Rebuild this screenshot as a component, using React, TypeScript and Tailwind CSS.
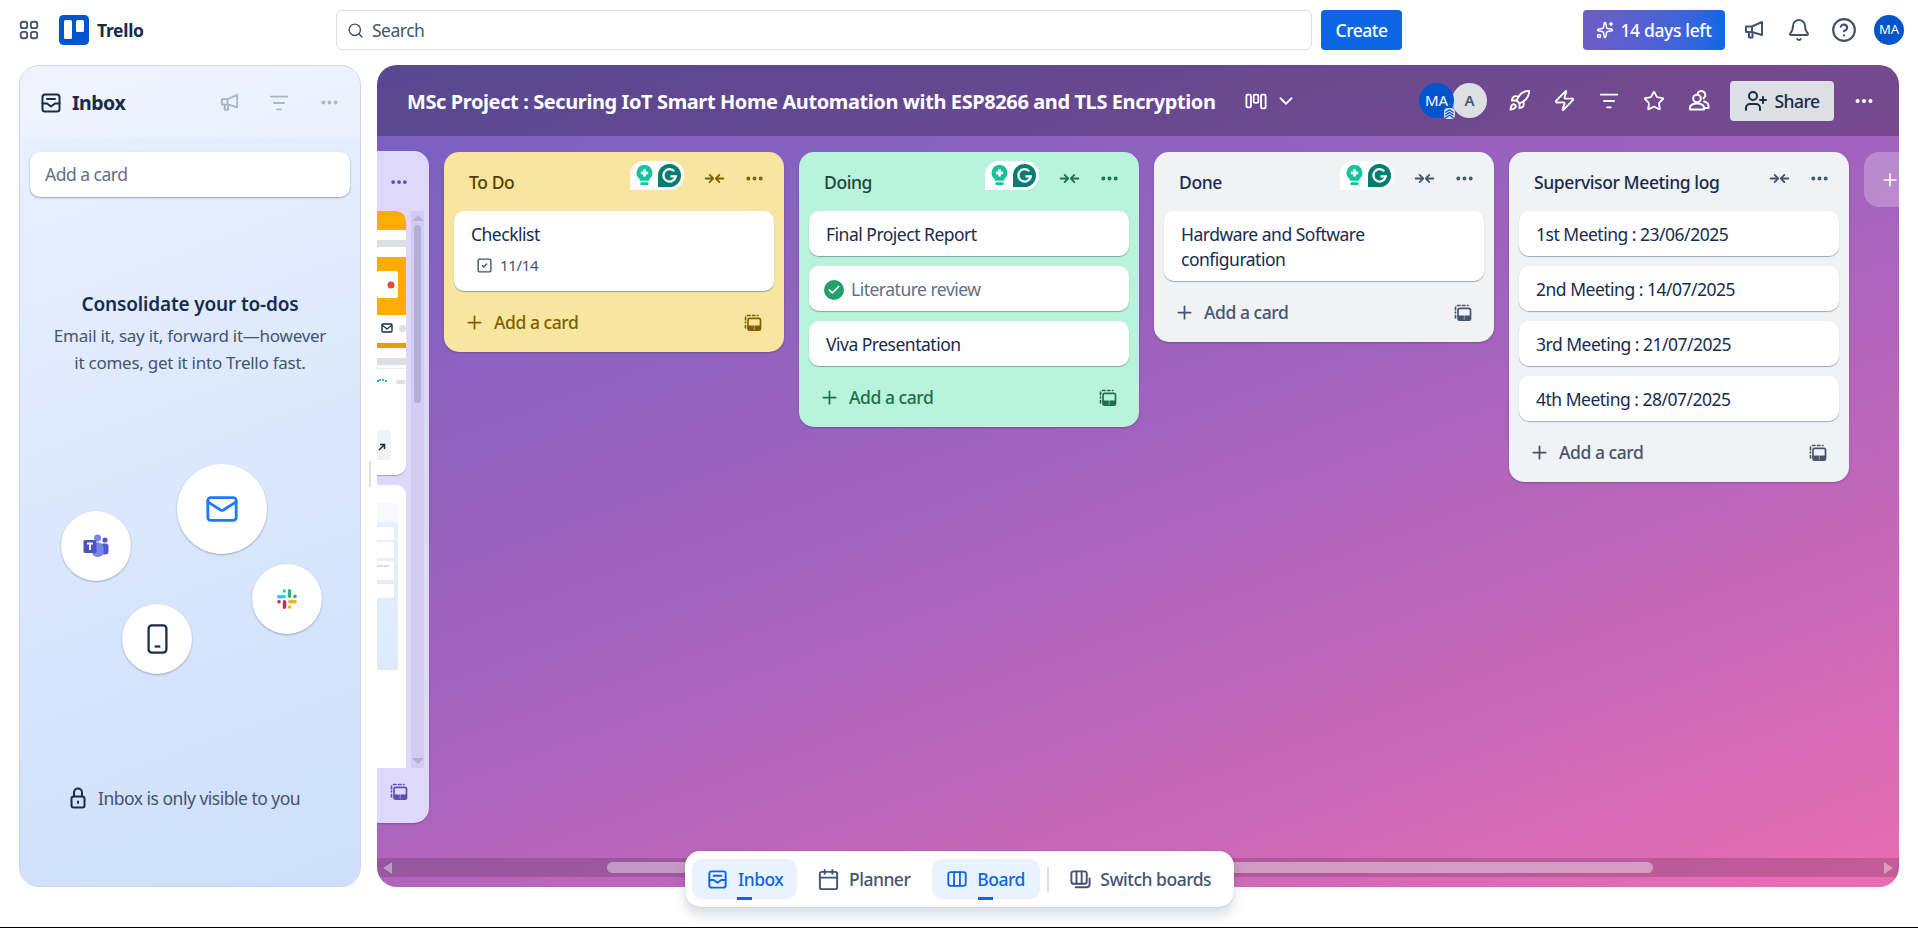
import React from 'react';
import { Search, Bell, CircleHelp, Sparkles, Rocket, Zap, Star, UserPlus, Ellipsis, Plus, ChevronDown, Mail, Calendar, SquareCheck, Check } from 'lucide-react';

type IconProps = { className?: string };

const svgProps = {
  viewBox: '0 0 24 24',
  fill: 'none',
  stroke: 'currentColor',
  strokeWidth: 2,
  strokeLinecap: 'round' as const,
  strokeLinejoin: 'round' as const,
};

const GridIcon = ({ className }: IconProps) => (
  <svg {...svgProps} className={className}>
    <rect x="3" y="3" width="7" height="7" rx="2.5" />
    <rect x="14" y="3" width="7" height="7" rx="2.5" />
    <rect x="3" y="14" width="7" height="7" rx="2.5" />
    <rect x="14" y="14" width="7" height="7" rx="2.5" />
  </svg>
);

const InboxIcon = ({ className }: IconProps) => (
  <svg {...svgProps} className={className}>
    <rect x="3.5" y="3.5" width="17" height="17" rx="2.5" />
    <path d="M8 8h8" />
    <path d="M3.5 12.5H8l4 3 4-3h4.5" />
  </svg>
);

const MegaphoneIcon = ({ className }: IconProps) => (
  <svg {...svgProps} className={className}>
    <path d="M4 8.5h6L20 4v13l-10-3H4z" />
    <path d="M7 14v5.5h3.5V14.5" />
    <path d="M10 8.5v5.5" />
  </svg>
);

const FilterIcon = ({ className }: IconProps) => (
  <svg {...svgProps} className={className}>
    <path d="M3 5h18" />
    <path d="M6.5 12h11" />
    <path d="M10 19h4" />
  </svg>
);

const CollapseIcon = ({ className }: IconProps) => (
  <svg {...svgProps} className={className}>
    <path d="M2 12h7.500" />
    <path d="M6.500 8l4 4-4 4" />
    <path d="M22 12h-7.500" />
    <path d="M17.500 8l-4 4 4 4" />
  </svg>
);

const TemplateIcon = ({ className }: IconProps) => (
  <svg {...svgProps} className={className}>
    <path d="M3 8V6a3 3 0 0 1 3-3h12" strokeDasharray="3 3" />
    <path d="M3 18v-7" strokeDasharray="3 3" />
    <rect x="6" y="6.500" width="15" height="14" rx="2" />
    <path d="M6.500 15.500h14v3a1.500 1.500 0 0 1-1.500 1.500H8a1.500 1.500 0 0 1-1.500-1.500z" fill="currentColor" strokeWidth="1" />
    <path d="M13.500 15v5" stroke="#ffffff" strokeWidth="1" opacity="0.5" />
  </svg>
);

const ViewsIcon = ({ className }: IconProps) => (
  <svg {...svgProps} className={className}>
    <rect x="1.500" y="5" width="5" height="14" rx="1.500" />
    <rect x="9.500" y="5" width="5" height="9" rx="1.500" />
    <rect x="17.500" y="5" width="5" height="15" rx="1.500" />
  </svg>
);

const BoardIcon = ({ className }: IconProps) => (
  <svg {...svgProps} className={className}>
    <rect x="2.500" y="4.500" width="19" height="15" rx="2.500" />
    <path d="M8.800 4.500v15" />
    <path d="M15.200 4.500v15" />
  </svg>
);

const SwitchIcon = ({ className }: IconProps) => (
  <svg {...svgProps} className={className}>
    <rect x="2.500" y="3.500" width="16" height="13" rx="2.500" />
    <path d="M7.800 3.500v13" />
    <path d="M13.200 3.500v13" />
    <path d="M21.500 11v6a3 3 0 0 1-3 3H7" />
  </svg>
);

const PeopleIcon = ({ className }: IconProps) => (
  <svg {...svgProps} className={className}>
    <circle cx="10" cy="9.500" r="3.800" />
    <path d="M3 20.500v-1.500c0-3 2.500-4.500 7-4.500s7 1.500 7 4.500v1.500z" />
    <path d="M10.500 5c.6-2 2-3 3.700-3a4 4 0 0 1 2.300 7.300" />
    <path d="M17 12.500c2.800.6 4.500 2.200 4.500 4.500v2h-3" />
  </svg>
);

const LockIcon = ({ className }: IconProps) => (
  <svg {...svgProps} className={className}>
    <rect x="5.500" y="10.500" width="13" height="11" rx="2" />
    <path d="M8 10.500V6.500a4 4 0 0 1 8 0v4" />
    <path d="M12 15.500v1.500" />
  </svg>
);

const TrelloLogo = ({ className }: IconProps) => (
  <svg viewBox="0 0 30 30" className={className}>
    <rect width="30" height="30" rx="4.500" fill="#0055CC" />
    <rect x="5" y="5" width="8" height="19" rx="1.500" fill="#fff" />
    <rect x="17" y="5" width="8" height="12" rx="1.500" fill="#fff" />
  </svg>
);

const TeamsLogo = ({ className }: IconProps) => (
  <svg viewBox="0 0 26 24" className={className}>
    <circle cx="22" cy="6" r="2.600" fill="#5059C9" />
    <rect x="17.500" y="9.500" width="8" height="11" rx="3" fill="#5059C9" />
    <circle cx="14.500" cy="4" r="3.500" fill="#7B83EB" />
    <rect x="9" y="8.500" width="11.500" height="14.500" rx="5" fill="#7B83EB" />
    <rect x="0.500" y="6" width="13" height="13" rx="1.500" fill="#4B53BC" />
    <path d="M4 9.500h6M7 9.500v6.500" stroke="#fff" strokeWidth="1.800" fill="none" />
  </svg>
);

const SlackLogo = ({ className }: IconProps) => (
  <svg viewBox="0 0 20 20" className={className}>
    <rect x="0" y="6" width="9" height="3.400" rx="1.700" fill="#36C5F0" />
    <circle cx="7.300" cy="2" r="1.800" fill="#36C5F0" />
    <rect x="10.800" y="0" width="3.400" height="9" rx="1.700" fill="#2EB67D" />
    <circle cx="18" cy="7.400" r="1.800" fill="#2EB67D" />
    <rect x="11" y="11" width="9" height="3.400" rx="1.700" fill="#ECB22E" />
    <circle cx="12.700" cy="18" r="1.800" fill="#ECB22E" />
    <rect x="5.800" y="11" width="3.400" height="9" rx="1.700" fill="#E01E5A" />
    <circle cx="2" cy="12.700" r="1.800" fill="#E01E5A" />
  </svg>
);

const PhoneIcon = ({ className }: IconProps) => (
  <svg viewBox="0 0 22 32" fill="none" stroke="currentColor" strokeWidth="2.400" className={className}>
    <rect x="1.500" y="1.500" width="19" height="29" rx="3.500" />
    <path d="M8 24h6" />
  </svg>
);

const GrammarlyWidget = () => (
  <div className="flex h-[29px] w-[54px] items-center justify-center gap-[5px] rounded-[14px] rounded-bl-none bg-white pl-[2px]">
    <svg viewBox="0 0 16 20" className="h-[21px] w-[17px]">
      <path d="M8 0a7.500 7.500 0 0 1 4.500 13.500V15h-9v-1.500A7.500 7.500 0 0 1 8 0z" fill="#15C39A" />
      <rect x="4" y="16.500" width="8" height="2.500" rx="1" fill="#15C39A" />
      <path d="M8 4v7M4.500 7.500h7" stroke="#fff" strokeWidth="2.600" />
    </svg>
    <svg viewBox="0 0 24 24" className="h-[23px] w-[23px]">
      <path d="M12 0a12 12 0 0 1 0 24H0V12A12 12 0 0 1 12 0z" fill="#027E6F" />
      <path d="M17 7.500A6.500 6.500 0 1 0 18.500 13H13" fill="none" stroke="#fff" strokeWidth="2.400" />
    </svg>
  </div>
);

// slice of the card cover that peeks out of the scrolled-away list
const CoverTop = () => (
  <svg viewBox="0 0 29 264" className="block h-[264px] w-[29px]">
    <rect width="29" height="264" fill="#fff" />
    <rect width="29" height="19" fill="#FFAB00" />
    <rect y="29" width="29" height="7" fill="#DCDFE4" />
    <rect y="46" width="29" height="58" fill="#FFAB00" />
    <rect x="0" y="60" width="21" height="27" rx="2" fill="#fff" />
    <circle cx="14" cy="74" r="3.500" fill="#E5493A" />
    <rect x="5" y="113" width="10" height="8" rx="1" fill="none" stroke="#172B4D" strokeWidth="1.400" />
    <path d="M5 114l5 4 5-4" fill="none" stroke="#172B4D" strokeWidth="1.200" />
    <rect x="22" y="114" width="7" height="7" rx="3.500" fill="#DCDFE4" />
    <rect y="132" width="29" height="5" fill="#E2A000" />
    <rect y="147" width="29" height="7" fill="#DCDFE4" />
    <rect y="157" width="29" height="1" fill="#EBECF0" />
    <path d="M0 170h2M3 168v2M6 168v2M8 170h2" stroke="#26B5C9" strokeWidth="1.800" />
    <rect x="19" y="169" width="10" height="4" rx="2" fill="#DCDFE4" />
    <rect x="-5" y="219" width="19" height="30" rx="3" fill="#F1F2F4" />
    <path d="M2 239l5-5M3 233.500h4.500V238" stroke="#172B4D" strokeWidth="1.500" fill="none" />
  </svg>
);

const CoverBottom = () => (
  <svg viewBox="0 0 29 283" className="block h-[283px] w-[29px]">
    <defs>
      <linearGradient id="previewFill" x1="0" y1="0" x2="0" y2="1">
        <stop offset="0" stopColor="#E9F2FE" />
        <stop offset="1" stopColor="#DCEAFB" />
      </linearGradient>
    </defs>
    <rect width="29" height="283" fill="#fff" />
    <rect y="18" width="21" height="167" fill="url(#previewFill)" />
    <rect y="18" width="21" height="19" fill="#F7F9FD" />
    <rect y="42" width="17" height="13" rx="2" fill="#fff" />
    <rect y="57" width="17" height="16" rx="2" fill="#fff" />
    <rect y="76" width="17" height="19" rx="2" fill="#fff" />
    <rect y="80" width="12" height="2" fill="#DCDFE4" />
    <rect y="99" width="17" height="14" rx="2" fill="#fff" />
  </svg>
);

type ListData = {
  title: string;
  cards: { text: string; done?: boolean; badge?: string }[];
  grammarly?: boolean;
  bg: string;
  title2: string;
  soft: string;
};

const lists: ListData[] = [
  {
    title: 'To Do',
    cards: [{ text: 'Checklist', badge: '11/14' }],
    grammarly: true,
    bg: 'bg-[#F8E6A0]',
    title2: 'text-[#533F04]',
    soft: 'text-[#7F5F01]',
  },
  {
    title: 'Doing',
    cards: [{ text: 'Final Project Report' }, { text: 'Literature review', done: true }, { text: 'Viva Presentation' }],
    grammarly: true,
    bg: 'bg-[#BAF3DB]',
    title2: 'text-[#164B35]',
    soft: 'text-[#216E4E]',
  },
  {
    title: 'Done',
    cards: [{ text: 'Hardware and Software configuration' }],
    grammarly: true,
    bg: 'bg-[#F1F2F4]',
    title2: 'text-[#172B4D]',
    soft: 'text-[#44546F]',
  },
  {
    title: 'Supervisor Meeting log',
    cards: [
      { text: '1st Meeting : 23/06/2025' },
      { text: '2nd Meeting : 14/07/2025' },
      { text: '3rd Meeting : 21/07/2025' },
      { text: '4th Meeting : 28/07/2025' },
    ],
    bg: 'bg-[#F1F2F4]',
    title2: 'text-[#172B4D]',
    soft: 'text-[#44546F]',
  },
];

const BoardList = ({ list }: { list: ListData }) => (
  <div className={`w-[340px] shrink-0 rounded-[15px] px-[10px] pb-[10px] shadow-[0_1px_2px_rgba(9,30,66,0.3)] ${list.bg}`}>
    <div className="flex h-[59px] items-start pt-[9px]">
      <div className={`ml-[15px] mt-[9px] flex-1 text-[17.5px] font-medium leading-[25px] tracking-[-0.4px] ${list.title2}`}>{list.title}</div>
      {list.grammarly && (
        <div className="mr-[18px]">
          <GrammarlyWidget />
        </div>
      )}
      <div className={`mr-[8px] mt-[5px] flex items-center gap-[15px] ${list.soft}`}>
        <CollapseIcon className="h-[25px] w-[25px] scale-[0.85]" />
        <Ellipsis className="mr-[-1px] h-[25px] w-[25px] scale-[0.85]" strokeWidth={2.5} />
      </div>
    </div>
    <div className="flex flex-col gap-[10px]">
      {list.cards.map((card) => (
        <div key={card.text} className="rounded-[10px] bg-white px-[17px] pb-[9px] pt-[11px] shadow-[0_1px_1px_rgba(9,30,66,0.35)]">
          <div className={`flex items-center gap-[7px] text-[17.5px] leading-[25px] tracking-[-0.5px] ${card.done ? 'text-[#626F86]' : 'text-[#172B4D]'}`}>
            {card.done && (
              <span className="ml-[-2px] flex h-[20px] w-[20px] shrink-0 items-center justify-center rounded-full bg-[#22A06B]">
                <Check className="h-[14px] w-[14px] text-white" strokeWidth={3} />
              </span>
            )}
            <span>{card.text}</span>
          </div>
          {card.badge && (
            <div className="mb-[4px] ml-[5px] mt-[6px] flex h-[25px] items-center gap-[7px] text-[15px] tracking-[-0.3px] text-[#44546F]">
              <SquareCheck className="h-[17px] w-[17px]" />
              {card.badge}
            </div>
          )}
        </div>
      ))}
    </div>
    <div className={`mt-[10px] flex h-[41px] items-center pl-[10px] pr-[11px] pt-[2px] ${list.soft}`}>
      <Plus className="h-[21px] w-[21px]" strokeWidth={2} />
      <span className="ml-[9px] flex-1 text-[17.5px] font-medium tracking-[-0.45px]">Add a card</span>
      <TemplateIcon className="h-[20px] w-[20px]" />
    </div>
  </div>
);

const ClippedList = () => (
  <div className="mt-[-1px] h-[672px] w-[52px] shrink-0 rounded-r-[15px] bg-[#DFD8FD] shadow-[0_1px_2px_rgba(9,30,66,0.3)]">
    <div className="flex h-[60px] items-start justify-end pr-[20px] pt-[21px] text-[#5E4DB2]">
      <Ellipsis className="h-[20px] w-[20px]" strokeWidth={2.5} />
    </div>
    <div className="flex h-[557px]">
      <div className="flex w-[29px] flex-col gap-[10px] overflow-hidden">
        <div className="overflow-hidden rounded-r-[10px] shadow-[0_1px_1px_rgba(9,30,66,0.3)]">
          <CoverTop />
        </div>
        <div className="overflow-hidden rounded-tr-[10px]">
          <CoverBottom />
        </div>
      </div>
      <div className="ml-[5px] flex w-[13px] flex-col items-center bg-[#D2CDF0] pt-[4px]">
        <div className="h-0 w-0 border-x-[6px] border-b-[6px] border-x-transparent border-b-[#B3B0D8]" />
        <div className="mt-[4px] h-[178px] w-[7px] rounded-full bg-[#B3B0D8]" />
        <div className="mb-[4px] mt-auto h-0 w-0 border-x-[6px] border-t-[6px] border-x-transparent border-t-[#B3B0D8]" />
      </div>
    </div>
    <div className="flex h-[55px] items-start justify-end pr-[20px] pt-[14px] text-[#5E4DB2]">
      <TemplateIcon className="h-[20px] w-[20px]" />
    </div>
  </div>
);

const Bubble = ({ className, children }: { className: string; children: React.ReactNode }) => (
  <div className={`absolute flex items-center justify-center rounded-full bg-white shadow-[0_1px_2px_rgba(9,30,66,0.3)] ${className}`}>{children}</div>
);

const InboxPanel = () => (
  <div className="relative flex h-full w-[342px] shrink-0 flex-col overflow-hidden rounded-[20px] border border-[#CFD8E8] bg-[linear-gradient(160deg,#E9F1FE,#CDDFFB)]">
    <div className="flex h-[71px] shrink-0 items-center bg-white/25 pl-[19px] pr-[20px] pt-[2px]">
      <InboxIcon className="h-[24px] w-[24px] text-[#172B4D]" />
      <span className="ml-[9px] flex-1 text-[19.5px] font-bold tracking-[-0.5px] text-[#172B4D]">Inbox</span>
      <MegaphoneIcon className="h-[23px] w-[23px] text-[#A9B6C8]" />
      <FilterIcon className="ml-[27px] h-[22px] w-[22px] text-[#A9B6C8]" />
      <Ellipsis className="ml-[29px] h-[21px] w-[21px] text-[#A9B6C8]" strokeWidth={2.5} />
    </div>
    <div className="mx-[10px] mt-[15px] flex h-[45px] shrink-0 items-center rounded-[10px] bg-white px-[15px] text-[17.5px] tracking-[-0.5px] text-[#626F86] shadow-[0_1px_2px_rgba(9,30,66,0.35)]">
      Add a card
    </div>
    <div className="mt-[93px] text-center text-[19px] font-semibold tracking-[-0.15px] text-[#172B4D]">Consolidate your to-dos</div>
    <div className="mt-[3px] text-center text-[17px] leading-[27px] tracking-[-0.25px] text-[#44546F]">
      Email it, say it, forward it—however
      <br />
      it comes, get it into Trello fast.
    </div>
    <Bubble className="left-[157px] top-[398px] h-[90px] w-[90px]">
      <Mail className="h-[34px] w-[34px] text-[#1D7AFC]" strokeWidth={2} />
    </Bubble>
    <Bubble className="left-[41px] top-[445px] h-[70px] w-[70px]">
      <TeamsLogo className="h-[24px] w-[26px]" />
    </Bubble>
    <Bubble className="left-[232px] top-[498px] h-[70px] w-[70px]">
      <SlackLogo className="h-[20px] w-[20px]" />
    </Bubble>
    <Bubble className="left-[102px] top-[538px] h-[70px] w-[70px]">
      <PhoneIcon className="h-[30px] w-[21px] text-[#172B4D]" />
    </Bubble>
    <div className="mb-[75px] ml-[46px] mt-auto flex items-center gap-[8px] text-[17.5px] tracking-[-0.5px] text-[#44546F]">
      <LockIcon className="h-[24px] w-[24px] text-[#172B4D]" />
      Inbox is only visible to you
    </div>
  </div>
);

const BoardHeader = () => (
  <div className="flex h-[71px] shrink-0 items-center bg-black/25 pl-[30px] text-white">
    <h1 className="w-[809px] whitespace-nowrap pt-[2px] text-[20px] font-bold tracking-[-0.4px]">MSc Project : Securing IoT Smart Home Automation with ESP8266 and TLS Encryption</h1>
    <ViewsIcon className="ml-[29px] h-[22px] w-[22px]" />
    <ChevronDown className="ml-[8px] h-[22px] w-[22px]" />
    <div className="ml-[122px] flex items-center">
      <div className="relative flex h-[35px] w-[35px] items-center justify-center rounded-full bg-[#0055CC] text-[15px]">
        MA
        <span className="absolute bottom-[-1px] right-[-1px] h-[11px] w-[11px] rounded-sm bg-white/80 text-[#0055CC]">
          <svg viewBox="0 0 12 12" fill="none" stroke="currentColor" strokeWidth="1.300">
            <path d="M1.500 5L6 2l4.500 3M1.500 8L6 5l4.500 3M1.500 11L6 8l4.500 3" />
          </svg>
        </span>
      </div>
      <div className="ml-[-2px] flex h-[35px] w-[35px] items-center justify-center rounded-full bg-[#DCDFE4] text-[15px] font-semibold text-[#44546F]">A</div>
    </div>
    <Rocket className="ml-[21px] h-[23px] w-[23px]" />
    <Zap className="ml-[22px] h-[23px] w-[23px]" />
    <FilterIcon className="ml-[22px] h-[22px] w-[22px]" />
    <Star className="ml-[23px] h-[22px] w-[22px]" />
    <PeopleIcon className="ml-[22px] h-[24px] w-[24px]" />
    <div className="ml-[19px] flex h-[40px] w-[104px] items-center justify-center gap-[6px] rounded-[4px] bg-[#DCDFE4] text-[17.5px] font-medium tracking-[-0.5px] text-[#172B4D]">
      <UserPlus className="h-[24px] w-[24px]" />
      <span className="pt-[2px]">Share</span>
    </div>
    <Ellipsis className="ml-[19px] h-[22px] w-[22px]" strokeWidth={2.5} />
  </div>
);

const BoardScrollbar = () => (
  <div className="mb-[10px] mt-auto flex h-[19px] shrink-0 items-center bg-black/15 pl-[6px] pr-[6px]">
    <div className="h-0 w-0 border-y-[6px] border-r-[9px] border-y-transparent border-r-white/40" />
    <div className="ml-[215px] h-[11px] w-[1046px] rounded-full bg-white/40" />
    <div className="ml-auto h-0 w-0 border-y-[6px] border-l-[9px] border-y-transparent border-l-white/40" />
  </div>
);

const Board = () => (
  <div className="relative flex h-full min-w-0 flex-1 flex-col overflow-hidden rounded-[20px] bg-[linear-gradient(160deg,#7560C2_0%,#A663BE_50%,#E86DB2_100%)]">
    <BoardHeader />
    <div className="flex min-h-0 flex-1 items-start gap-[15px] pt-[16px]">
      <ClippedList />
      {lists.map((list) => (
        <BoardList key={list.title} list={list} />
      ))}
      <div className="flex h-[55px] w-[50px] shrink-0 items-center rounded-l-[15px] bg-white/25 pl-[16px] text-white">
        <Plus className="h-[20px] w-[20px]" />
      </div>
    </div>
    <BoardScrollbar />
  </div>
);

const TopBar = () => (
  <div className="flex h-[65px] shrink-0 items-center bg-white pb-[5px] text-[#44546F]">
    <GridIcon className="ml-[18px] h-[22px] w-[22px]" />
    <TrelloLogo className="ml-[19px] h-[30px] w-[30px]" />
    <span className="ml-[8px] w-[48px] text-[17.5px] font-bold tracking-[-0.3px] text-[#172B4D]">Trello</span>
    <div className="ml-[191px] flex h-[40px] w-[976px] items-center rounded-[6px] border border-[#DCDFE4] bg-white pl-[10px] text-[17.5px] tracking-[-0.5px]">
      <Search className="h-[17px] w-[17px]" />
      <span className="ml-[8px] pt-[1px]">Search</span>
    </div>
    <div className="ml-[9px] flex h-[40px] w-[81px] items-center justify-center rounded-[4px] bg-[#0C66E4] text-[17.5px] font-medium tracking-[-0.5px] text-white">Create</div>
    <div className="ml-auto flex h-[40px] w-[142px] items-center justify-center gap-[6px] rounded-[4px] bg-gradient-to-r from-[#6E5DC6] to-[#0C66E4] text-[17.5px] font-medium tracking-[-0.35px] text-white">
      <Sparkles className="h-[18px] w-[18px]" />
      14 days left
    </div>
    <MegaphoneIcon className="ml-[17px] h-[24px] w-[24px]" />
    <Bell className="ml-[21px] h-[24px] w-[24px]" />
    <CircleHelp className="ml-[20px] h-[26px] w-[26px]" />
    <div className="ml-[17px] mr-[14px] flex h-[30px] w-[30px] items-center justify-center rounded-full bg-[#0055CC] text-[13px] text-white">MA</div>
  </div>
);

const BottomNav = () => (
  <div className="absolute left-[685px] top-[851px] flex h-[56px] w-[549px] items-center rounded-[15px] bg-white pl-[7px] text-[17.5px] font-medium tracking-[-0.5px] text-[#44546F] shadow-[0_8px_12px_rgba(9,30,66,0.15),0_0_1px_rgba(9,30,66,0.4)]">
    <div className="relative flex h-[40px] w-[105px] items-center gap-[9px] rounded-[10px] bg-[#E9F2FF] pl-[14px] text-[#0C66E4]">
      <InboxIcon className="h-[23px] w-[23px]" />
      Inbox
      <span className="absolute bottom-[-1px] left-[45px] h-[3px] w-[15px] bg-[#0C66E4]" />
    </div>
    <div className="ml-[20px] flex items-center gap-[9px]">
      <Calendar className="h-[23px] w-[23px]" />
      Planner
    </div>
    <div className="relative ml-[22px] flex h-[40px] w-[108px] items-center gap-[9px] rounded-[10px] bg-[#E9F2FF] pl-[14px] text-[#0C66E4]">
      <BoardIcon className="h-[22px] w-[22px]" />
      Board
      <span className="absolute bottom-[-1px] left-[46px] h-[3px] w-[15px] bg-[#0C66E4]" />
    </div>
    <div className="ml-[7px] h-[25px] w-[2px] bg-[#DCDFE4]" />
    <div className="ml-[20px] flex items-center gap-[8px]">
      <SwitchIcon className="h-[23px] w-[23px]" />
      Switch boards
    </div>
  </div>
);

const App: React.FC = () => (
  <div className="relative flex h-[928px] w-full flex-col overflow-hidden bg-white font-['Noto_Sans','Open_Sans',sans-serif]">
    <TopBar />
    <div className="flex h-[822px] shrink-0 gap-[16px] pl-[19px] pr-[19px]">
      <InboxPanel />
      <Board />
    </div>
    <div className="mt-auto h-px bg-black" />
    <div className="absolute left-[369px] top-[461px] h-[26px] w-[2px] bg-[#DCDFE4]" />
    <BottomNav />
  </div>
);

export default App;
